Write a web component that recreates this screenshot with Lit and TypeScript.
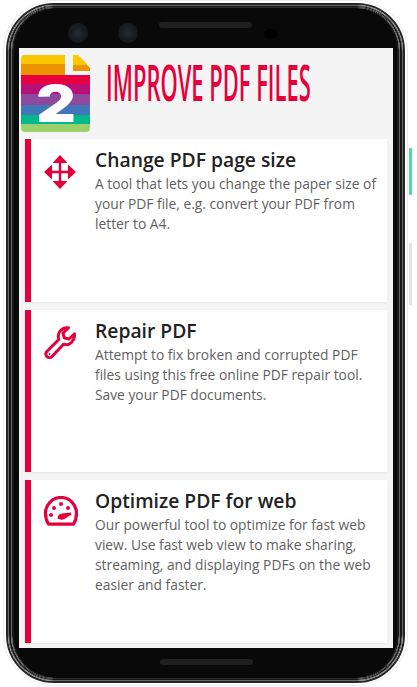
import { LitElement, html, css, svg } from "lit";
import { customElement } from "lit/decorators.js";

const moveIcon = svg`<svg class="icon" width="32" height="34" viewBox="0 0 32 34" fill="#e4003a">
  <path d="M16 0 L23.500 8 H8.500 Z M16 34 L23.500 26 H8.500 Z M0 17 L8 9.500 V24.500 Z M32 17 L24 9.500 V24.500 Z"/>
  <path d="M16 6 V28 M6 17 H26" fill="none" stroke="#e4003a" stroke-width="2.400"/>
</svg>`;

const wrenchIcon = svg`<svg class="icon" width="32" height="34" viewBox="0 0 32 34" fill="none" stroke="#e4003a" stroke-width="3" stroke-linejoin="round">
  <path d="M2.800 25.500 L14.800 13.500 C12.800 7.500 17 1 24.500 1.800 L19 7.300 L20.300 11.800 L25 13 L30.500 7.800 C31.200 14 26 20.500 19.500 18.200 L8 30.500 C4.800 33.800 -0.500 29 2.800 25.500 Z"/>
  <circle cx="5.500" cy="28" r="0.900" fill="#e4003a" stroke="none"/>
</svg>`;

const gaugeIcon = svg`<svg class="icon" width="34" height="30" viewBox="0 0 34 30" fill="#e4003a">
  <path d="M4.500 28.200 Q1.500 23.500 1.500 17 A15.500 15.500 0 0 1 32.500 17 Q32.500 23.500 29.500 28.200 Z" fill="none" stroke="#e4003a" stroke-width="3.200" stroke-linejoin="round"/>
  <circle cx="7" cy="19" r="2"/><circle cx="10" cy="12" r="2"/><circle cx="17" cy="8" r="2"/><circle cx="24" cy="12" r="2"/>
  <path d="M13.500 22.500 Q13.500 18 18 17.500 L27 16.500 L27.500 18.500 L20.500 23 Q17 24.500 13.500 22.500 Z"/>
</svg>`;

const logo = svg`<svg class="logo" width="69" height="77" viewBox="0 0 69 77">
  <defs><clipPath id="c"><path d="M4 0 H44 V20 H69 V73 Q69 77 65 77 H4 Q0 77 0 73 V4 Q0 0 4 0 Z"/></clipPath></defs>
  <g clip-path="url(#c)">
    <rect width="69" height="9" fill="#fbc800"/>
    <rect y="9" width="69" height="11" fill="#ee9300"/>
    <rect y="20" width="69" height="9" fill="#e8003f"/>
    <rect y="29" width="69" height="10" fill="#b80f78"/>
    <rect y="39" width="69" height="11" fill="#8d4a9c"/>
    <rect y="50" width="69" height="10" fill="#4176b8"/>
    <rect y="60" width="69" height="9" fill="#00b88a"/>
    <rect y="69" width="69" height="8" fill="#9cd06c"/>
  </g>
  <path d="M52 0 H57 L66 9 V10 H52 Z" fill="#fbc800"/>
  <path d="M52 10 H66 L69 13 V16 H52 Z" fill="#ee9300"/>
</svg>`;

const tools = [
  { icon: moveIcon, title: "Change PDF page size", text: "A tool that lets you change the paper size of your PDF file, e.g. convert your PDF from letter to A4." },
  { icon: wrenchIcon, title: "Repair PDF", text: "Attempt to fix broken and corrupted PDF files using this free online PDF repair tool. Save your PDF documents." },
  { icon: gaugeIcon, title: "Optimize PDF for web", text: "Our powerful tool to optimize for fast web view. Use fast web view to make sharing, streaming, and displaying PDFs on the web easier and faster." },
];

@customElement("app-root")
export class AppRoot extends LitElement {
  static styles = css`
    :host { display: block; width: 417px; height: 687px; padding: 3px 0 0 6px; box-sizing: border-box; background: #fff; overflow: hidden; font-family: "Open Sans", sans-serif; }
    .phone { position: relative; box-sizing: border-box; width: 399px; height: 680px; border-radius: 48px; border: 2px solid #262626; box-shadow: 0 0 0 2px #fff, 0 0 0 3px #ececec; }
    .r1, .r2, .r3, .r4 { box-sizing: border-box; height: 100%; }
    .r1 { border-radius: 46px; border: 1px solid #666; }
    .r2 { border-radius: 45px; border: 2px solid #161616; border-top-width: 1px; border-bottom-width: 1px; }
    .r3 { border-radius: 43px; border: 1px solid #666; border-top-color: #2a2a2a; border-bottom-color: #2a2a2a; }
    .r4 { border-radius: 42px; border: 2px solid #1a1a1a; border-top: 1px solid #090909; border-bottom: 1px solid #090909; overflow: hidden; background: #090909; display: flex; flex-direction: column; padding: 0 4px 0 5px; }
    .top { height: 39px; flex: none; display: flex; align-items: flex-start; padding-left: 49px; }
    .cam { width: 20px; height: 20px; margin-top: 14px; border-radius: 50%; background: radial-gradient(circle, #252a30 10%, #181d22 45%, #12161a 100%); }
    .cam + .cam { margin-left: 30px; }
    .speaker { width: 93px; height: 6px; border-radius: 3px; background: #1f1f1f; }
    .top .speaker { margin: 13px 0 0 21px; }
    .sensor { width: 14px; height: 10px; margin: 20px 0 0 12px; border-radius: 50%; background: #000; }
    .bottom { height: 29px; flex: none; display: flex; justify-content: center; padding-top: 11px; box-sizing: border-box; }
    .screen { flex: 1; min-height: 0; background: #f4f4f4; display: flex; flex-direction: column; padding: 0 6px 5px; }
    .head { height: 91px; flex: none; display: flex; align-items: flex-start; margin-left: -4px; }
    .mark { position: relative; margin-top: 7px; flex: none; width: 69px; height: 77px; }
    .logo { display: block; }
    .two { position: absolute; left: 0; right: 0; top: 24px; text-align: center; font: 900 51px/50px "Inter", sans-serif; color: #fff; transform: translateX(0.5px) scaleX(1.2); }
    .title { margin: 3px 0 0 16px; color: #e4003a; font-size: 51px; line-height: 60px; font-weight: 600; white-space: nowrap; transform: scaleX(0.43); transform-origin: left center; }
    .cards { flex: 1; min-height: 0; display: grid; grid-template-rows: repeat(3, 1fr); gap: 8px; }
    .card { background: #fff; border-left: 6px solid #e4003a; display: flex; box-shadow: 0 1px 2px rgba(0,0,0,.06); padding: 7px 8px 0 13px; }
    .iconbox { width: 51px; flex: none; display: flex; justify-content: flex-start; align-items: flex-start; padding-top: 9px; }
    h3 { margin: 0; font-size: 19.3px; line-height: 28px; font-weight: 600; color: #222; }
    p { margin: 0; font-size: 13.8px; line-height: 20px; color: #5f5f5f; }
    .btn { position: absolute; left: 401px; width: 3px; border-radius: 1px; }
    .green { top: 143px; height: 47px; background: #4fd8a4; }
    .gray { top: 238px; height: 62px; background: #e2e2e2; }
  `;

  render() {
    return html`
      <div class="phone">
        <div class="r1"><div class="r2"><div class="r3"><div class="r4">
          <div class="top">
            <div class="cam"></div><div class="cam"></div>
            <div class="speaker"></div>
            <div class="sensor"></div>
          </div>
          <div class="screen">
            <div class="head">
              <div class="mark">${logo}<span class="two">2</span></div>
              <div class="title">IMPROVE PDF FILES</div>
            </div>
            <div class="cards">
              ${tools.map(t => html`
                <div class="card">
                  <div class="iconbox">${t.icon}</div>
                  <div><h3>${t.title}</h3><p>${t.text}</p></div>
                </div>`)}
            </div>
          </div>
          <div class="bottom"><div class="speaker"></div></div>
        </div></div></div></div>
        <div class="btn green"></div>
        <div class="btn gray"></div>
      </div>
    `;
  }
}
